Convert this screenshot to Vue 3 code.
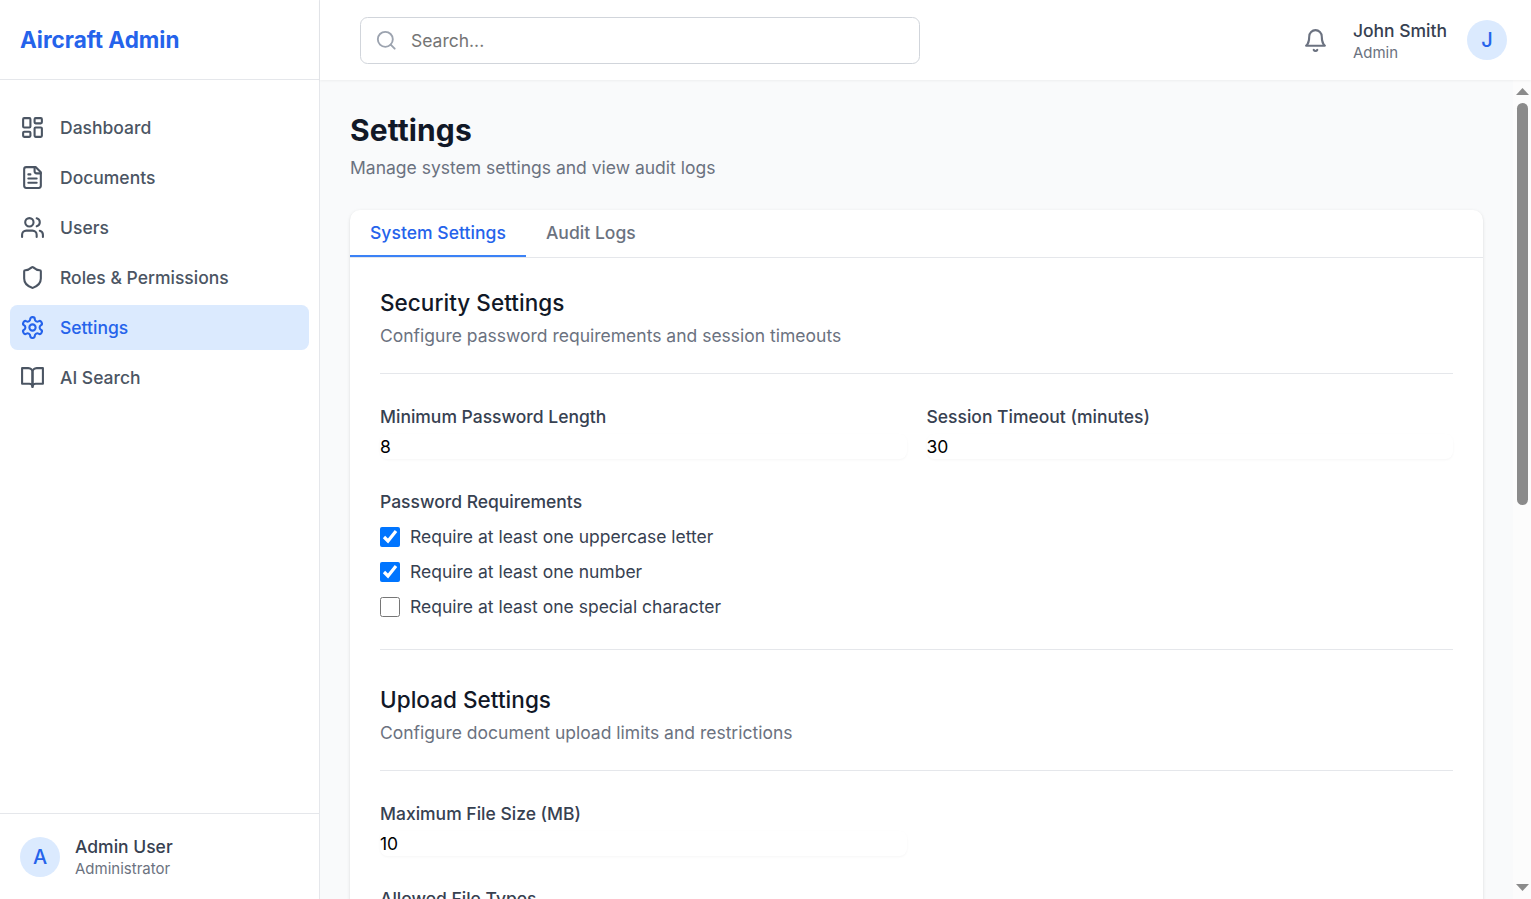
<script setup>
import { ref } from 'vue'

const navItems = [
  {
    label: 'Dashboard',
    icon: '<rect width="7" height="9" x="3" y="3" rx="1"/><rect width="7" height="5" x="14" y="3" rx="1"/><rect width="7" height="9" x="14" y="12" rx="1"/><rect width="7" height="5" x="3" y="16" rx="1"/>',
  },
  {
    label: 'Documents',
    icon: '<path d="M15 2H6a2 2 0 0 0-2 2v16a2 2 0 0 0 2 2h12a2 2 0 0 0 2-2V7Z"/><path d="M14 2v4a2 2 0 0 0 2 2h4"/><path d="M10 9H8"/><path d="M16 13H8"/><path d="M16 17H8"/>',
  },
  {
    label: 'Users',
    icon: '<path d="M16 21v-2a4 4 0 0 0-4-4H6a4 4 0 0 0-4 4v2"/><circle cx="9" cy="7" r="4"/><path d="M22 21v-2a4 4 0 0 0-3-3.87"/><path d="M16 3.13a4 4 0 0 1 0 7.75"/>',
  },
  {
    label: 'Roles & Permissions',
    icon: '<path d="M20 13c0 5-3.5 7.5-7.66 8.95a1 1 0 0 1-.67-.01C7.5 20.5 4 18 4 13V6a1 1 0 0 1 1-1c2 0 4.5-1.2 6.24-2.72a1.17 1.17 0 0 1 1.52 0C14.51 3.81 17 5 19 5a1 1 0 0 1 1 1z"/>',
  },
  {
    label: 'Settings',
    active: true,
    icon: '<path d="M12.22 2h-.44a2 2 0 0 0-2 2v.18a2 2 0 0 1-1 1.73l-.43.25a2 2 0 0 1-2 0l-.15-.08a2 2 0 0 0-2.73.73l-.22.38a2 2 0 0 0 .73 2.73l.15.1a2 2 0 0 1 1 1.72v.51a2 2 0 0 1-1 1.74l-.15.09a2 2 0 0 0-.73 2.73l.22.38a2 2 0 0 0 2.73.73l.15-.08a2 2 0 0 1 2 0l.43.25a2 2 0 0 1 1 1.73V20a2 2 0 0 0 2 2h.44a2 2 0 0 0 2-2v-.18a2 2 0 0 1 1-1.73l.43-.25a2 2 0 0 1 2 0l.15.08a2 2 0 0 0 2.73-.73l.22-.39a2 2 0 0 0-.73-2.73l-.15-.08a2 2 0 0 1-1-1.74v-.5a2 2 0 0 1 1-1.74l.15-.09a2 2 0 0 0 .73-2.73l-.22-.38a2 2 0 0 0-2.73-.73l-.15.08a2 2 0 0 1-2 0l-.43-.25a2 2 0 0 1-1-1.73V4a2 2 0 0 0-2-2z"/><circle cx="12" cy="12" r="3"/>',
  },
  {
    label: 'AI Search',
    icon: '<path d="M2 3h6a4 4 0 0 1 4 4v14a3 3 0 0 0-3-3H2z"/><path d="M22 3h-6a4 4 0 0 0-4 4v14a3 3 0 0 1 3-3h7z"/>',
  },
]

const requirements = ref([
  { label: 'Require at least one uppercase letter', checked: true },
  { label: 'Require at least one number', checked: true },
  { label: 'Require at least one special character', checked: false },
])
const minLength = ref('8')
const timeout = ref('30')
const maxSize = ref('10')
</script>

<template>
  <div class="shell">
    <aside class="sidebar">
      <div class="brand">Aircraft Admin</div>
      <nav class="nav">
        <a v-for="item in navItems" :key="item.label" class="nav-item" :class="{ active: item.active }">
          <svg class="icon" viewBox="0 0 24 24" v-html="item.icon"></svg>
          <span>{{ item.label }}</span>
        </a>
      </nav>
      <div class="account">
        <div class="avatar">A</div>
        <div>
          <div class="name">Admin User</div>
          <div class="role">Administrator</div>
        </div>
      </div>
    </aside>

    <div class="body">
      <header class="topbar">
        <label class="search">
          <svg class="icon search-icon" viewBox="0 0 24 24"><circle cx="11" cy="11" r="8" /><path d="m21 21-4.3-4.3" /></svg>
          <input type="text" placeholder="Search..." />
        </label>
        <div class="topbar-right">
          <svg class="icon bell" viewBox="0 0 24 24">
            <path d="M6 8a6 6 0 0 1 12 0c0 7 3 9 3 9H3s3-2 3-9" />
            <path d="M10.3 21a1.94 1.94 0 0 0 3.4 0" />
          </svg>
          <div>
            <div class="name">John Smith</div>
            <div class="role">Admin</div>
          </div>
          <div class="avatar">J</div>
        </div>
      </header>

      <div class="scroller">
        <main class="content">
          <h1>Settings</h1>
          <p class="muted">Manage system settings and view audit logs</p>

          <div class="card">
            <div class="tabs">
              <button class="tab current">System Settings</button>
              <button class="tab">Audit Logs</button>
            </div>

            <div class="panel">
              <section>
                <div class="section-head">
                  <h2>Security Settings</h2>
                  <p class="muted">Configure password requirements and session timeouts</p>
                </div>
                <div class="fields">
                  <label class="field"><span>Minimum Password Length</span><input v-model="minLength" type="text" /></label>
                  <label class="field"><span>Session Timeout (minutes)</span><input v-model="timeout" type="text" /></label>
                </div>
                <div class="requirements">
                  <div class="label">Password Requirements</div>
                  <label v-for="r in requirements" :key="r.label" class="check">
                    <input v-model="r.checked" type="checkbox" />
                    <span>{{ r.label }}</span>
                  </label>
                </div>
              </section>

              <section class="upload">
                <div class="section-head">
                  <h2>Upload Settings</h2>
                  <p class="muted">Configure document upload limits and restrictions</p>
                </div>
                <div class="fields">
                  <label class="field"><span>Maximum File Size (MB)</span><input v-model="maxSize" type="text" /></label>
                </div>
                <div class="requirements">
                  <div class="label">Allowed File Types</div>
                </div>
              </section>
            </div>
          </div>
        </main>
        <div class="scrollbar">
          <svg class="arrow" viewBox="0 0 13 7"><path d="M6.5 0 13 7H0z" /></svg>
          <div class="thumb"></div>
          <svg class="arrow down" viewBox="0 0 13 7"><path d="M0 0h13L6.5 7z" /></svg>
        </div>
      </div>
    </div>
  </div>
</template>

<style>
html,
body {
  margin: 0;
  overflow: hidden;
}
</style>

<style scoped>
* {
  box-sizing: border-box;
}
.shell {
  display: flex;
  height: 100vh;
  overflow: hidden;
  font-family: Inter, sans-serif;
  font-size: 17.5px;
  line-height: 25px;
  color: #111827;
  background: #f9fafb;
}
.icon {
  width: 25px;
  height: 25px;
  flex: none;
  fill: none;
  stroke: currentColor;
  stroke-width: 2;
  stroke-linecap: round;
  stroke-linejoin: round;
}
.sidebar {
  display: flex;
  flex-direction: column;
  width: 320px;
  flex: none;
  background: #fff;
  border-right: 1px solid #e5e7eb;
}
.brand {
  display: flex;
  align-items: center;
  height: 80px;
  padding: 0 20px;
  border-bottom: 1px solid #e5e7eb;
  color: #2563eb;
  font-size: 22.5px;
  font-weight: 700;
}
.nav {
  display: flex;
  flex-direction: column;
  gap: 5px;
  flex: 1;
  padding: 25px 10px;
}
.nav-item {
  display: flex;
  align-items: center;
  gap: 15px;
  height: 45px;
  padding: 0 10px;
  border-radius: 7.5px;
  color: #4b5563;
  font-weight: 500;
}
.nav-item.active {
  background: #dbeafe;
  color: #2563eb;
}
.account {
  display: flex;
  align-items: center;
  gap: 15px;
  height: 86px;
  padding: 0 20px;
  border-top: 1px solid #e5e7eb;
}
.avatar {
  display: flex;
  align-items: center;
  justify-content: center;
  width: 40px;
  height: 40px;
  border-radius: 50%;
  background: #dbeafe;
  color: #2563eb;
  font-size: 20px;
  font-weight: 500;
}
.account .avatar {
  padding-top: 1px;
}
.name {
  color: #374151;
  font-weight: 500;
}
.role {
  color: #6b7280;
  font-size: 15px;
  line-height: 20px;
}
.body {
  display: flex;
  flex-direction: column;
  flex: 1;
  min-width: 0;
}
.topbar {
  display: flex;
  align-items: center;
  justify-content: space-between;
  height: 80px;
  flex: none;
  padding: 0 24px 0 40px;
  background: #fff;
  box-shadow: 0 1.25px 2.5px rgba(0, 0, 0, 0.05);
  z-index: 1;
}
.search {
  display: flex;
  align-items: center;
  gap: 13.5px;
  width: 560px;
  height: 47px;
  padding: 0 14px;
  border: 1px solid #d1d5db;
  border-radius: 7.5px;
}
.search-icon {
  width: 22.5px;
  height: 22.5px;
  color: #9ca3af;
}
.search input {
  flex: 1;
  border: 0;
  padding: 0;
  outline: 0;
  background: none;
  font: inherit;
}
.search input::placeholder {
  color: #757575;
}
.topbar-right {
  display: flex;
  align-items: center;
}
.bell {
  margin-right: 25px;
  color: #6b7280;
}
.topbar-right .avatar {
  margin-left: 20px;
}
.scroller {
  display: flex;
  flex: 1;
  min-height: 0;
}
.content {
  flex: 1;
  padding: 30px;
  overflow: hidden;
}
h1,
h2,
p {
  margin: 0;
}
h1 {
  font-size: 30px;
  line-height: 40px;
  font-weight: 700;
  letter-spacing: 0.1px;
}
h2 {
  font-size: 22.5px;
  line-height: 30px;
  font-weight: 500;
  letter-spacing: 0.04px;
}
.muted {
  margin-top: 5px;
  color: #6b7280;
}
.card {
  margin-top: 30px;
  background: #fff;
  border-radius: 10px;
  box-shadow: 0 1.25px 3.75px rgba(0, 0, 0, 0.1), 0 1.25px 2.5px -1.25px rgba(0, 0, 0, 0.1);
}
.tabs {
  display: flex;
  height: 48px;
  border-bottom: 1px solid #e5e7eb;
}
.tab {
  padding: 0 20px;
  border: 0;
  border-bottom: 2px solid transparent;
  background: none;
  color: #6b7280;
  font: inherit;
  font-weight: 500;
  letter-spacing: 0.04px;
}
.tab.current {
  border-color: #3b82f6;
  color: #2563eb;
}
.panel {
  padding: 30px;
}
.section-head {
  padding-bottom: 25px;
  border-bottom: 1px solid #e5e7eb;
}
.fields {
  display: grid;
  grid-template-columns: 1fr 1fr;
  gap: 20px;
  margin-top: 30px;
}
.field {
  display: flex;
  flex-direction: column;
  gap: 5px;
  color: #374151;
  font-weight: 500;
}
.field input {
  height: 25px;
  padding: 0;
  border: 0;
  border-radius: 7.5px;
  outline: 0;
  background: #fff;
  box-shadow: 0 1px 2.5px rgba(0, 0, 0, 0.04);
  color: #000;
  font: inherit;
  font-weight: 400;
}
.requirements {
  display: flex;
  flex-direction: column;
  gap: 10px;
  margin-top: 30px;
  color: #374151;
}
.label {
  font-weight: 500;
}
.check {
  display: flex;
  align-items: center;
  gap: 10px;
}
.check input {
  width: 20px;
  height: 20px;
  margin: 0;
}
.upload {
  margin-top: 30px;
  padding-top: 35px;
  border-top: 1px solid #e5e7eb;
}
.scrollbar {
  display: flex;
  flex-direction: column;
  align-items: center;
  width: 18px;
  padding: 8px 0;
  background: #fcfcfc;
}
.arrow {
  width: 13px;
  height: 7px;
  fill: #8b8b8b;
}
.thumb {
  width: 11px;
  height: 402px;
  margin-top: 8px;
  border-radius: 6px;
  background: #8b8b8b;
}
.arrow.down {
  margin-top: auto;
}
</style>
